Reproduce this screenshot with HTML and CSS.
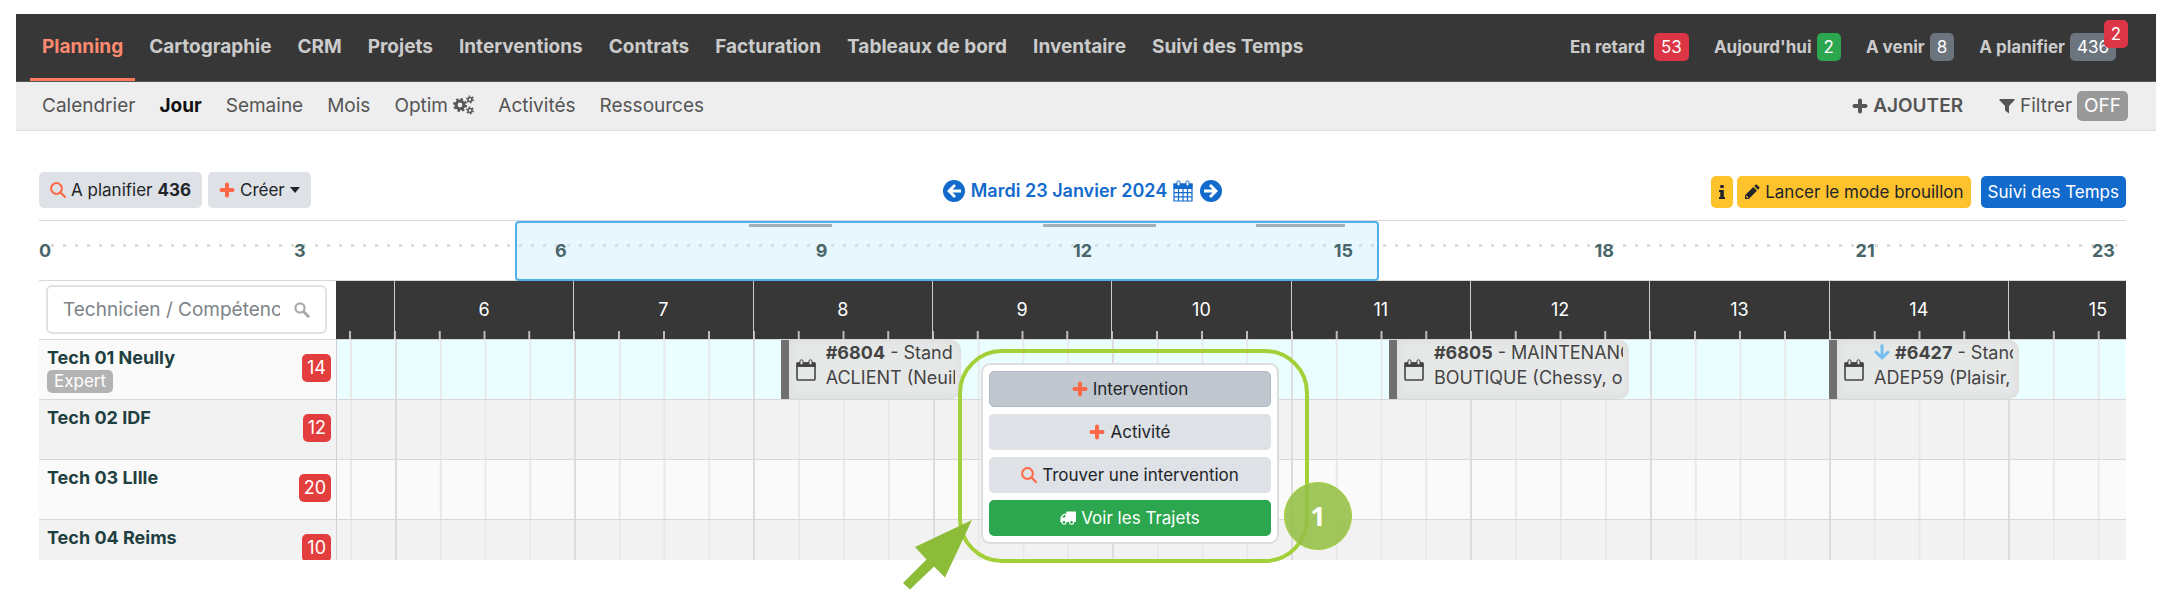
FILE: index.html
```html
<!DOCTYPE html>
<html lang="fr">

<head>
    <meta charset="UTF-8">
    <meta name="viewport" content="width=device-width, initial-scale=1.0">
    <title>Planning - Jour</title>
    <link rel="stylesheet" href="styles.css">
</head>

<body>
    <!-- Icônes -->
    <svg class="sprite" aria-hidden="true">
        <symbol id="i-plus" viewBox="0 0 16 16">
            <path d="M8 2.5v11M2.5 8h11" fill="none" stroke="currentColor" stroke-width="4" stroke-linecap="round" />
        </symbol>
        <symbol id="i-search" viewBox="0 0 16 16">
            <circle cx="6.5" cy="6.5" r="5.4" fill="none" stroke="currentColor" stroke-width="2" />
            <path d="M10.5 10.5L15 15" stroke="currentColor" stroke-width="2.2" stroke-linecap="round" />
        </symbol>
        <symbol id="i-loupe" viewBox="0 0 16 16">
            <circle cx="6" cy="6" r="4.6" fill="none" stroke="currentColor" stroke-width="2.2" />
            <path d="M9.8 9.8L14.2 14.2" stroke="currentColor" stroke-width="3" stroke-linecap="round" />
        </symbol>
        <symbol id="i-cogs" viewBox="0 0 21 20">
            <g fill="none" stroke="currentColor">
                <circle cx="7" cy="10" r="3.9" stroke-width="3" />
                <circle cx="7" cy="10" r="6" stroke-width="2" stroke-dasharray="2.35 2.36" />
                <circle cx="17" cy="4.5" r="2" stroke-width="1.6" />
                <circle cx="17" cy="4.5" r="3.3" stroke-width="1.3" stroke-dasharray="1.7 1.75" />
                <circle cx="17" cy="15.5" r="2" stroke-width="1.6" />
                <circle cx="17" cy="15.5" r="3.3" stroke-width="1.3" stroke-dasharray="1.7 1.75" />
            </g>
        </symbol>
        <symbol id="i-filter" viewBox="0 0 16 16">
            <path d="M.5 1h15v1.2L10 8v7.5L6 12.5V8L.5 2.2z" fill="currentColor" />
        </symbol>
        <symbol id="i-left" viewBox="0 0 22 22">
            <circle cx="11" cy="11" r="11" fill="currentColor" />
            <path d="M12 5L6 11l6 6M6.5 11H18" fill="none" stroke="#fff" stroke-width="2.8" />
        </symbol>
        <symbol id="i-right" viewBox="0 0 22 22">
            <circle cx="11" cy="11" r="11" fill="currentColor" />
            <path d="M10 5l6 6-6 6M15.5 11H4" fill="none" stroke="#fff" stroke-width="2.8" />
        </symbol>
        <symbol id="i-calendar" viewBox="0 0 20 22">
            <path d="M1 4h18v17H1zM1 8.3h18M1 12.6h18M1 16.8h18M5.5 8v13M10 8v13M14.5 8v13" fill="none" stroke="currentColor" stroke-width="1.2" />
            <path d="M.5 3.5h19V8H.5z" fill="currentColor" />
            <rect x="4" y=".8" width="3" height="5" rx="1.4" fill="#fff" stroke="currentColor" />
            <rect x="13" y=".8" width="3" height="5" rx="1.4" fill="#fff" stroke="currentColor" />
        </symbol>
        <symbol id="i-date" viewBox="0 0 20 22">
            <rect x="1" y="4" width="18" height="17" rx="1" fill="none" stroke="currentColor" stroke-width="1.6" />
            <path d="M.5 3.5h19V8H.5z" fill="currentColor" />
            <rect x="4" y=".8" width="3" height="5" rx="1.4" fill="#e6e8e8" stroke="currentColor" />
            <rect x="13" y=".8" width="3" height="5" rx="1.4" fill="#e6e8e8" stroke="currentColor" />
        </symbol>
        <symbol id="i-pencil" viewBox="0 0 16 16">
            <path d="M1 11.3L9.3 3l3.7 3.7L4.7 15H1zM10.2 2.1l1.3-1.3q.7-.6 1.4 0l2.3 2.3q.6.7 0 1.4l-1.3 1.3z" fill="currentColor" />
            <path d="M2.2 12l1.8 1.8" stroke="#fec22d" stroke-width="1.2" />
        </symbol>
        <symbol id="i-info" viewBox="0 0 8 16">
            <path d="M2.3 1h3.4v3H2.3zM1 6h4.8v7H7v2H1v-2h1.3V8H1z" fill="currentColor" />
        </symbol>
        <symbol id="i-down" viewBox="0 0 16 16">
            <path d="M8 1.5v12M2 8l6 6 6-6" fill="none" stroke="currentColor" stroke-width="3" stroke-linecap="round" stroke-linejoin="round" />
        </symbol>
        <symbol id="i-truck" viewBox="0 0 18 15">
            <path d="M7 1q0-.7.7-.7h9.6q.7 0 .7.7v10.3q0 .7-.8.7H1Q0 12 0 11.300l.6-1V6.800q0-.5.4-.9L3.800 3q.4-.4 1-.4H7z" fill="currentColor" />
            <path d="M2 7l2.600-2.800H6V7z" fill="#2ca64f" />
            <circle cx="4.500" cy="12.300" r="2.200" fill="#2ca64f" stroke="currentColor" stroke-width="1.300" />
            <circle cx="13" cy="12.300" r="2.200" fill="#2ca64f" stroke="currentColor" stroke-width="1.300" />
        </symbol>
    </svg>

    <header>
        <!-- Menu principal -->
        <div class="navbar">
            <nav class="menu">
                <a href="#" class="active">Planning</a>
                <a href="#">Cartographie</a>
                <a href="#">CRM</a>
                <a href="#">Projets</a>
                <a href="#">Interventions</a>
                <a href="#">Contrats</a>
                <a href="#">Facturation</a>
                <a href="#">Tableaux de bord</a>
                <a href="#">Inventaire</a>
                <a href="#">Suivi des Temps</a>
            </nav>
            <div class="stats">
                <a href="#" class="late">En retard <span class="badge red">53</span></a>
                <a href="#">Aujourd'hui <span class="badge green">2</span></a>
                <a href="#">A venir <span class="badge grey">8</span></a>
                <a href="#">A planifier <span class="badge grey">436</span><span class="badge red notif">2</span></a>
            </div>
        </div>

        <!-- Sous-menu -->
        <div class="subbar">
            <nav class="submenu">
                <a href="#">Calendrier</a>
                <a href="#" class="active">Jour</a>
                <a href="#">Semaine</a>
                <a href="#">Mois</a>
                <a href="#">Optim <svg class="icon cogs"><use href="#i-cogs" /></svg></a>
                <a href="#">Activités</a>
                <a href="#">Ressources</a>
            </nav>
            <div class="actions">
                <button class="add"><svg class="icon"><use href="#i-plus" /></svg>AJOUTER</button>
                <button class="filter"><svg class="icon"><use href="#i-filter" /></svg>Filtrer <span class="off">OFF</span></button>
            </div>
        </div>
    </header>

    <main>
        <div class="toolbar">
            <div class="tools">
                <button class="btn"><svg class="icon orange"><use href="#i-search" /></svg>A planifier <b>436</b></button>
                <button class="btn"><svg class="icon orange"><use href="#i-plus" /></svg>Créer<span class="caret"></span></button>
            </div>
            <div class="date">
                <button aria-label="Jour précédent"><svg class="icon big"><use href="#i-left" /></svg></button>
                <button class="day">Mardi 23 Janvier 2024 <svg class="icon big"><use href="#i-calendar" /></svg></button>
                <button aria-label="Jour suivant"><svg class="icon big"><use href="#i-right" /></svg></button>
            </div>
            <div class="tools right">
                <button class="btn small yellow info" aria-label="Information"><svg class="icon thin"><use href="#i-info" /></svg></button>
                <button class="btn small yellow"><svg class="icon"><use href="#i-pencil" /></svg>Lancer le mode brouillon</button>
                <button class="btn small blue">Suivi des Temps</button>
            </div>
        </div>

        <!-- Vue de la journée -->
        <div class="overview">
            <span class="h0">0</span>
            <span class="h3">3</span>
            <span class="h6">6</span>
            <span class="h9">9</span>
            <span class="h12">12</span>
            <span class="h15">15</span>
            <span class="h18">18</span>
            <span class="h21">21</span>
            <span class="h23">23</span>
            <div class="range" style="left: 22.8%; width: 41.4%"></div>
            <i class="busy" style="left: 34%; width: 4%"></i>
            <i class="busy" style="left: 48.1%; width: 5.4%"></i>
            <i class="busy" style="left: 58.3%; width: 4.3%"></i>
        </div>

        <div class="planner">
            <div class="row head">
                <label class="search">
                    <input type="text" placeholder="Technicien / Compétence" aria-label="Technicien / Compétence">
                    <svg class="icon"><use href="#i-loupe" /></svg>
                </label>
                <div class="hours">
                    <span></span><span>6</span><span>7</span><span>8</span><span>9</span><span>10</span><span>11</span><span>12</span><span>13</span><span>14</span><span>15</span>
                </div>
            </div>

            <div class="rows">
                <div class="row current">
                    <div class="tech">
                        <div><strong>Tech 01 Neully</strong><span class="skill">Expert</span></div>
                        <span class="count">14</span>
                    </div>
                    <div class="track">
                        <i></i><i></i><i></i><i></i><i></i><i></i><i></i><i></i><i></i><i></i><i></i>
                        <a href="#" class="event" style="left: 24.8%; width: 10.1%">
                            <svg class="icon cal"><use href="#i-date" /></svg>
                            <span><b>#6804</b> - Stand<br>ACLIENT (Neuil</span>
                        </a>
                        <a href="#" class="event" style="left: 58.8%; width: 13.4%">
                            <svg class="icon cal"><use href="#i-date" /></svg>
                            <span><b>#6805</b> - MAINTENANC<br>BOUTIQUE (Chessy, o</span>
                        </a>
                        <a href="#" class="event" style="left: 83.4%; width: 10.6%">
                            <svg class="icon cal"><use href="#i-date" /></svg>
                            <span><svg class="icon down"><use href="#i-down" /></svg> <b>#6427</b> - Stand<br>ADEP59 (Plaisir,</span>
                        </a>
                    </div>
                </div>
                <div class="row">
                    <div class="tech">
                        <strong>Tech 02 IDF</strong>
                        <span class="count">12</span>
                    </div>
                    <div class="track"><i></i><i></i><i></i><i></i><i></i><i></i><i></i><i></i><i></i><i></i><i></i></div>
                </div>
                <div class="row">
                    <div class="tech">
                        <strong>Tech 03 LIlle</strong>
                        <span class="count">20</span>
                    </div>
                    <div class="track"><i></i><i></i><i></i><i></i><i></i><i></i><i></i><i></i><i></i><i></i><i></i></div>
                </div>
                <div class="row">
                    <div class="tech">
                        <strong>Tech 04 Reims</strong>
                        <span class="count">10</span>
                    </div>
                    <div class="track"><i></i><i></i><i></i><i></i><i></i><i></i><i></i><i></i><i></i><i></i><i></i></div>
                </div>
            </div>

            <!-- Menu contextuel -->
            <div class="popup">
                <button class="btn hover"><svg class="icon orange"><use href="#i-plus" /></svg>Intervention</button>
                <button class="btn"><svg class="icon orange"><use href="#i-plus" /></svg>Activité</button>
                <button class="btn"><svg class="icon orange"><use href="#i-search" /></svg>Trouver une intervention</button>
                <button class="btn route"><svg class="icon"><use href="#i-truck" /></svg>Voir les Trajets</button>
                <div class="frame"></div>
                <span class="step">1</span>
                <svg class="pointer" viewBox="0 0 70 70">
                    <path d="M70 0L43 57.500 32 46.500 8 69.500 1 63 24.500 39.500 13 27z" fill="#8dbd38" />
                </svg>
            </div>
        </div>
    </main>
</body>

</html>
```

FILE: styles.css
```css
* {
    box-sizing: border-box;
}

body {
    margin: 14px 14px 0 16px;
    font-family: Inter, "Liberation Sans", sans-serif;
    font-size: 18px;
    line-height: 24px;
    color: #212529;
    background-color: #fff;
}

a {
    color: inherit;
    text-decoration: none;
}

button {
    font: inherit;
    color: inherit;
    border: none;
    background: none;
    padding: 0;
    cursor: pointer;
}

.sprite {
    display: none;
}

.icon {
    width: 16px;
    height: 16px;
    flex: none;
}

.icon.big {
    width: 22px;
    height: 22px;
}

.icon.cal {
    width: 20px;
    height: 22px;
}

.icon.thin {
    width: 8px;
}

.icon.cogs {
    width: 21px;
    height: 20px;
    vertical-align: -3px;
}

.orange {
    color: #ff6846;
}

/* Menu principal */
.navbar {
    display: flex;
    justify-content: space-between;
    height: 68px;
    padding: 0 28px 0 14px;
    background-color: #373737;
    color: #cbcbcb;
    font-weight: bold;
    border-bottom: 1px solid #555;
}

.menu,
.submenu {
    display: flex;
    white-space: nowrap;
}

.menu {
    gap: 2px;
    font-size: 19px;
}

.menu a {
    display: flex;
    align-items: center;
    padding: 0 12px 2px;
}

.menu .active {
    color: #ff8a70;
    box-shadow: inset 0 -3px #ff7a5e;
}

.stats {
    display: flex;
    align-items: center;
    gap: 25px;
    padding-bottom: 2px;
    font-size: 17px;
    white-space: nowrap;
}

.stats a {
    display: flex;
    align-items: center;
    gap: 5px;
    position: relative;
}

.stats .late {
    gap: 9px;
}

.stats a:last-child {
    padding-right: 12px;
}

.badge {
    padding: 2px 7px;
    border-radius: 5px;
    color: #fff;
    font-weight: normal;
}

.red {
    background-color: #dc3545;
}

.green {
    background-color: #2ca64f;
}

.grey {
    background-color: #6c757d;
}

.notif {
    position: absolute;
    top: -13px;
    right: 0;
}

/* Sous-menu */
.subbar {
    display: flex;
    justify-content: space-between;
    height: 49px;
    padding: 0 28px 0 26px;
    background-color: #eee;
    border-bottom: 1px solid #ddd;
    color: #555;
    font-size: 19px;
}

.submenu {
    align-items: center;
    gap: 24px;
}

.submenu .active {
    color: #111;
    font-weight: bold;
}

.actions {
    display: flex;
    align-items: center;
    gap: 36px;
}

.actions button {
    display: flex;
    align-items: center;
    gap: 5px;
}

.add {
    font-weight: 600;
}

.off {
    padding: 3px 7px;
    border-radius: 5px;
    background-color: #999;
    color: #fff;
}

main {
    padding: 41px 30px 38px 23px;
}

/* Barre d'outils */
.toolbar {
    display: grid;
    grid-template-columns: 1fr auto 1fr;
    align-items: end;
    padding-bottom: 12px;
}

.tools {
    display: flex;
    gap: 6px;
}

.tools.right {
    justify-content: flex-end;
    gap: 4px;
}

.btn {
    display: flex;
    align-items: center;
    justify-content: center;
    gap: 5px;
    height: 36px;
    padding: 0 11px;
    border-radius: 5px;
    background-color: #dee1e6;
    font-size: 17px;
}

.btn.small {
    height: 32px;
    padding: 0 7px;
}

.btn.yellow {
    background-color: #fec22d;
}

.btn.blue {
    margin-left: 6px;
    background-color: #116acc;
    color: #fff;
}

.caret {
    border: 5px solid transparent;
    border-top: 6px solid #212529;
    border-bottom: 0;
}

.date {
    display: flex;
    align-items: center;
    gap: 6px;
    height: 34px;
    color: #116acc;
    font-weight: 600;
}

.date button {
    display: flex;
    align-items: center;
    gap: 5px;
}

/* Vue de la journée */
.overview {
    position: relative;
    display: grid;
    grid-template-columns: repeat(24, 1fr);
    align-items: center;
    height: 61px;
    border-top: 1px solid #d8d8d8;
    border-bottom: 1px solid #d8d8d8;
    color: #48666a;
    font-weight: bold;
    text-align: center;
}

.overview::before {
    content: "";
    position: absolute;
    top: 23px;
    left: 12px;
    right: 0;
    height: 3px;
    background: repeating-linear-gradient(90deg, #ddd 0 3px, transparent 3px 12px);
}

.overview span {
    grid-row: 1;
    z-index: 2;
}

.h0 {
    grid-column: 1;
    text-align: left;
}

.h3 {
    grid-column: 3 / 5;
}

.h6 {
    grid-column: 6 / 8;
}

.h9 {
    grid-column: 9 / 11;
}

.h12 {
    grid-column: 12 / 14;
}

.h15 {
    grid-column: 15 / 17;
}

.h18 {
    grid-column: 18 / 20;
}

.h21 {
    grid-column: 21 / 23;
}

.h23 {
    grid-column: 24;
    text-align: right;
    padding-right: 11px;
}

.range {
    position: absolute;
    top: 0;
    bottom: -1px;
    border: 2px solid #4fb0ea;
    border-radius: 4px;
    background-color: rgba(190, 229, 253, 0.35);
    z-index: 1;
}

.busy {
    position: absolute;
    top: 3px;
    height: 3px;
    background-color: #a3b0b7;
    z-index: 1;
}

/* Planning */
.planner {
    position: relative;
}

.row {
    display: grid;
    grid-template-columns: 297px 1fr;
    height: 60px;
    background-color: #f2f2f2;
    border-bottom: 1px solid #d8d8d8;
}

.row:nth-child(odd) {
    background-color: #fafafa;
}

.row.head {
    height: 59px;
    background-color: #fff;
}

.search {
    display: flex;
    align-items: center;
    gap: 14px;
    margin: 4px 9px 5px 7px;
    padding: 0 15px;
    border: 2px solid #dee2e6;
    border-radius: 6px;
    color: #aaa;
}

.search input {
    flex: 1;
    min-width: 0;
    padding: 0;
    border: none;
    outline: none;
    font: inherit;
    font-size: 19px;
}

.search input::placeholder {
    color: #7d8388;
    opacity: 1;
}

.hours,
.track {
    display: grid;
    grid-template-columns: 323fr repeat(9, 1000fr) 658fr;
    min-width: 0;
}

.hours {
    background-color: #373737;
    color: #fff;
    line-height: 58px;
    text-align: center;
}

.hours span {
    border-left: 1px solid #ccc;
    background: linear-gradient(90deg, #bbb 2px, transparent 2px) 0 100% / 25% 8px repeat-x border-box;
}

.hours span:first-child {
    border: none;
    background-position: 100% 100%;
    background-size: 77.4% 8px;
}

.hours span:last-child {
    padding-left: 61px;
    background-size: 38% 8px;
}

.rows {
    height: 220px;
    overflow: hidden;
}

.track {
    position: relative;
    border-left: 1px solid #d0d0d0;
}

.track i {
    border-left: 2px solid #ddd;
    background: linear-gradient(90deg, #e9e9e9 2px, transparent 2px) 0 0 / 25% 100% border-box;
}

.track i:first-child {
    border: none;
    background-position: 100% 0;
    background-size: 77.4% 100%;
}

.track i:nth-child(11) {
    background-size: 38% 100%;
}

.current .track {
    background-color: #ebfeff;
}

.tech {
    display: flex;
    justify-content: space-between;
    align-items: flex-start;
    padding: 6px 5px 0 8px;
    color: #1f4040;
}

.tech strong {
    display: block;
}

.skill {
    display: block;
    width: fit-content;
    padding: 0 7px;
    border-radius: 5px;
    background-color: #b3b3b3;
    color: #fff;
    font-size: 17px;
    line-height: 23px;
}

.count {
    margin-top: 8px;
    padding: 2px 5px;
    border-radius: 5px;
    background-color: #e33e3e;
    color: #fff;
}

.event {
    position: absolute;
    top: 0;
    bottom: 0;
    display: flex;
    align-items: center;
    gap: 10px;
    padding: 0 6px 0 7px;
    border-left: 8px solid #707070;
    border-radius: 0 10px 10px 0;
    background-color: #e6e8e8;
    box-shadow: inset 0 0 8px #d8dada;
    color: #444;
    white-space: nowrap;
}

.event span {
    flex: 1;
    overflow: hidden;
    height: 100%;
    line-height: 25px;
}

.icon.down {
    color: #74bff0;
    vertical-align: -1px;
}

/* Menu contextuel */
.popup {
    position: absolute;
    top: 82px;
    left: 942px;
    width: 298px;
    display: grid;
    gap: 7px;
    padding: 6px;
    border: 2px solid #ddd;
    border-radius: 9px;
    background-color: #fff;
}

.btn.hover {
    background-color: #c0c7cf;
    border: 1px solid #adb9c6;
}

.btn.route {
    background-color: #2ca64f;
    color: #fff;
}

.frame {
    position: absolute;
    top: -16px;
    right: -32px;
    bottom: -21px;
    left: -25px;
    border: 4px solid #a3d039;
    border-radius: 44px;
    pointer-events: none;
}

.step {
    position: absolute;
    right: -75px;
    bottom: -8px;
    width: 68px;
    height: 68px;
    border: 1px solid #a3d039;
    border-radius: 50%;
    background-color: rgba(148, 191, 69, 0.88);
    color: #fff;
    font-family: "Open Sans", sans-serif;
    font-size: 27px;
    font-weight: bold;
    line-height: 66px;
    text-align: center;
}

.pointer {
    position: absolute;
    left: -81px;
    bottom: -48px;
    width: 70px;
    height: 70px;
}
```
